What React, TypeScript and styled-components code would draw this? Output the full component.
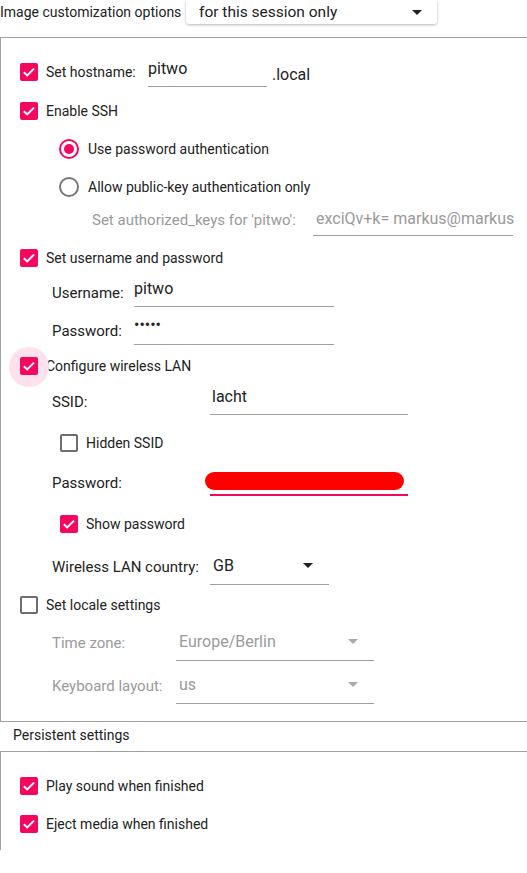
import React from "react";
import styled, { createGlobalStyle, css } from "styled-components";

const PINK = "#f5065f";
const TEXT = "#222222";
const GREY_TEXT = "#9a9a9a";
const LINE = "#a0a0a0";

const Global = createGlobalStyle`
  html, body { margin: 0; padding: 0; background: #ffffff; }
  body { font-family: Roboto, "Noto Sans", "Liberation Sans", sans-serif; color: ${TEXT}; }
  * { box-sizing: border-box; }
`;

const Page = styled.div`
  width: 527px;
  height: 873px;
  overflow: hidden;
  background: #fff;
`;

const TopBar = styled.div`
  display: flex;
  align-items: center;
  height: 24px;
  gap: 6px;
`;

const TopLabel = styled.span`
  font-size: 14px;
  width: 180px;
  white-space: nowrap;
`;

const Combo = styled.div`
  width: 251px;
  height: 24px;
  display: flex;
  align-items: center;
  justify-content: space-between;
  padding: 0 15px 0 13px;
  background: #fff;
  border-radius: 0 0 3px 3px;
  box-shadow: 0 1px 3px rgba(0, 0, 0, 0.28);
  font-size: 15.5px;
`;

const Frame = styled.div<{ $mt: number; $pt: number; $pb: number; $bottom?: boolean }>`
  margin-top: ${(p) => p.$mt}px;
  border-top: 1px solid ${LINE};
  border-left: 1px solid ${LINE};
  ${(p) => (p.$bottom ? css`border-bottom: 1px solid ${LINE};` : "")}
  padding-top: ${(p) => p.$pt}px;
  padding-bottom: ${(p) => p.$pb}px;
  display: flex;
  flex-direction: column;
`;

const Row = styled.div<{ $mt: number; $h?: number; $indent: number; $gap?: number }>`
  display: flex;
  align-items: center;
  height: ${(p) => p.$h ?? 30}px;
  margin-top: ${(p) => p.$mt}px;
  padding-left: ${(p) => p.$indent}px;
  gap: ${(p) => p.$gap ?? 0}px;
`;

const CheckLabel = styled.span`
  font-size: 14px;
  white-space: nowrap;
`;

const FormLabel = styled.span<{ $w: number; $disabled?: boolean; $dy?: number; $size?: number }>`
  width: ${(p) => p.$w}px;
  flex: none;
  font-size: ${(p) => p.$size ?? 15}px;
  white-space: nowrap;
  color: ${(p) => (p.$disabled ? GREY_TEXT : TEXT)};
  position: relative;
  top: ${(p) => p.$dy ?? 0}px;
`;

const Field = styled.div<{
  $w: number;
  $h?: number;
  $focused?: boolean;
  $disabled?: boolean;
  $pb?: number;
  $pl?: number;
  $pr?: number;
}>`
  position: relative;
  width: ${(p) => p.$w}px;
  height: ${(p) => p.$h ?? 30}px;
  flex: none;
  display: flex;
  align-items: center;
  justify-content: space-between;
  padding-bottom: ${(p) => p.$pb ?? 6}px;
  padding-left: ${(p) => p.$pl ?? 0}px;
  padding-right: ${(p) => p.$pr ?? 16}px;
  font-size: 16px;
  white-space: nowrap;
  color: ${(p) => (p.$disabled ? GREY_TEXT : TEXT)};
  border-bottom: ${(p) => (p.$focused ? `2px solid ${PINK}` : `1px solid ${LINE}`)};
`;

const FieldText = styled.span``;

const Suffix = styled.span`
  font-size: 16px;
  margin-left: -3px;
  position: relative;
  top: 2px;
`;

const Redaction = styled.div`
  position: absolute;
  left: -5px;
  top: 6px;
  width: 199px;
  height: 18px;
  border-radius: 9px;
  background: #ff0000;
`;

const BoxWrap = styled.span<{ $halo?: boolean }>`
  position: relative;
  display: inline-flex;
  flex: none;
  width: 18px;
  height: 18px;
  ${(p) =>
    p.$halo
      ? css`
          &::before {
            content: "";
            position: absolute;
            left: -11px;
            top: -10px;
            width: 40px;
            height: 40px;
            border-radius: 50%;
            background: #fde1ec;
          }
        `
      : ""}
`;

const Box = styled.span<{ $checked: boolean }>`
  position: relative;
  width: 18px;
  height: 18px;
  border-radius: 2px;
  display: inline-flex;
  align-items: center;
  justify-content: center;
  ${(p) =>
    p.$checked
      ? css`
          background: ${PINK};
        `
      : css`
          border: 2px solid #6e6e6e;
        `}
`;

const Check = ({ checked, halo }: { checked: boolean; halo?: boolean }) => (
  <BoxWrap $halo={halo}>
    <Box $checked={checked}>
      {checked && (
        <svg width="18" height="18" viewBox="0 0 18 18">
          <polyline points="3.8,9.2 7.2,12.4 14,5.6" fill="none" stroke="#fff" strokeWidth="2" />
        </svg>
      )}
    </Box>
  </BoxWrap>
);

const RadioRing = styled.span<{ $on: boolean }>`
  width: 20px;
  height: 20px;
  flex: none;
  border-radius: 50%;
  border: 2px solid ${(p) => (p.$on ? PINK : "#777")};
  display: inline-flex;
  align-items: center;
  justify-content: center;
  &::after {
    content: "";
    width: 10px;
    height: 10px;
    border-radius: 50%;
    background: ${(p) => (p.$on ? PINK : "transparent")};
  }
`;

const Arrow = ({ color = "#222" }: { color?: string }) => (
  <svg width="10" height="5" viewBox="0 0 10 5">
    <polygon points="0,0 10,0 5,5" fill={color} />
  </svg>
);

const Caption = styled.div`
  height: 29px;
  display: flex;
  align-items: center;
  padding-left: 13px;
  padding-bottom: 3px;
  font-size: 14px;
`;

export default function App() {
  return (
    <Page>
      <Global />
      <TopBar>
        <TopLabel>Image customization options</TopLabel>
        <Combo>
          <span>for this session only</span>
          <Arrow />
        </Combo>
      </TopBar>

      <Frame $mt={13} $pt={19} $pb={17} $bottom>
        <Row $mt={0} $indent={19} $gap={8}>
          <Check checked />
          <FormLabel $w={94} $size={14}>Set hostname:</FormLabel>
          <Field $w={119}>
            <FieldText>pitwo</FieldText>
          </Field>
          <Suffix>.local</Suffix>
        </Row>
        <Row $mt={9} $indent={19} $gap={8}>
          <Check checked />
          <CheckLabel>Enable SSH</CheckLabel>
        </Row>
        <Row $mt={8} $indent={58} $gap={9}>
          <RadioRing $on />
          <CheckLabel>Use password authentication</CheckLabel>
        </Row>
        <Row $mt={8} $indent={58} $gap={9}>
          <RadioRing $on={false} />
          <CheckLabel>Allow public-key authentication only</CheckLabel>
        </Row>
        <Row $mt={4} $indent={91}>
          <FormLabel $w={221} $disabled $dy={-1}>Set authorized_keys for 'pitwo':</FormLabel>
          <Field $w={200} $disabled $pb={4} $pl={3} $pr={0}>
            <FieldText>exciQv+k= markus@markus</FieldText>
          </Field>
        </Row>
        <Row $mt={7} $indent={19} $gap={8}>
          <Check checked />
          <CheckLabel>Set username and password</CheckLabel>
        </Row>
        <Row $mt={4} $indent={51}>
          <FormLabel $w={82} $dy={1}>Username:</FormLabel>
          <Field $w={200}>
            <FieldText>pitwo</FieldText>
          </Field>
        </Row>
        <Row $mt={8} $indent={51}>
          <FormLabel $w={82} $dy={1}>Password:</FormLabel>
          <Field $w={200} $pb={10}>
            <FieldText>•••••</FieldText>
          </Field>
        </Row>
        <Row $mt={6} $indent={19} $gap={8}>
          <Check checked halo />
          <CheckLabel>Configure wireless LAN</CheckLabel>
        </Row>
        <Row $mt={4} $indent={51}>
          <FormLabel $w={158} $dy={2}>SSID:</FormLabel>
          <Field $w={198} $pl={2}>
            <FieldText>lacht</FieldText>
          </Field>
        </Row>
        <Row $mt={13} $indent={59} $gap={8}>
          <Check checked={false} />
          <CheckLabel>Hidden SSID</CheckLabel>
        </Row>
        <Row $mt={8} $indent={51}>
          <FormLabel $w={158} $dy={2}>Password:</FormLabel>
          <Field $w={198} $focused>
            <Redaction />
          </Field>
        </Row>
        <Row $mt={13} $indent={59} $gap={8}>
          <Check checked />
          <CheckLabel>Show password</CheckLabel>
        </Row>
        <Row $mt={12} $h={34} $indent={51}>
          <FormLabel $w={158} $dy={-1}>Wireless LAN country:</FormLabel>
          <Field $w={119} $h={34} $pb={4} $pl={3}>
            <FieldText>GB</FieldText>
            <Arrow />
          </Field>
        </Row>
        <Row $mt={5} $indent={19} $gap={8}>
          <Check checked={false} />
          <CheckLabel>Set locale settings</CheckLabel>
        </Row>
        <Row $mt={7} $h={34} $indent={51}>
          <FormLabel $w={124} $disabled $dy={-1}>Time zone:</FormLabel>
          <Field $w={198} $h={34} $disabled $pb={4} $pl={3}>
            <FieldText>Europe/Berlin</FieldText>
            <Arrow color="#aaaaaa" />
          </Field>
        </Row>
        <Row $mt={9} $h={34} $indent={51}>
          <FormLabel $w={124} $disabled $dy={-1}>Keyboard layout:</FormLabel>
          <Field $w={198} $h={34} $disabled $pb={4} $pl={3}>
            <FieldText>us</FieldText>
            <Arrow color="#aaaaaa" />
          </Field>
        </Row>
      </Frame>

      <Caption>Persistent settings</Caption>

      <Frame $mt={0} $pt={19} $pb={11}>
        <Row $mt={0} $indent={19} $gap={8}>
          <Check checked />
          <CheckLabel>Play sound when finished</CheckLabel>
        </Row>
        <Row $mt={8} $indent={19} $gap={8}>
          <Check checked />
          <CheckLabel>Eject media when finished</CheckLabel>
        </Row>
      </Frame>
    </Page>
  );
}
